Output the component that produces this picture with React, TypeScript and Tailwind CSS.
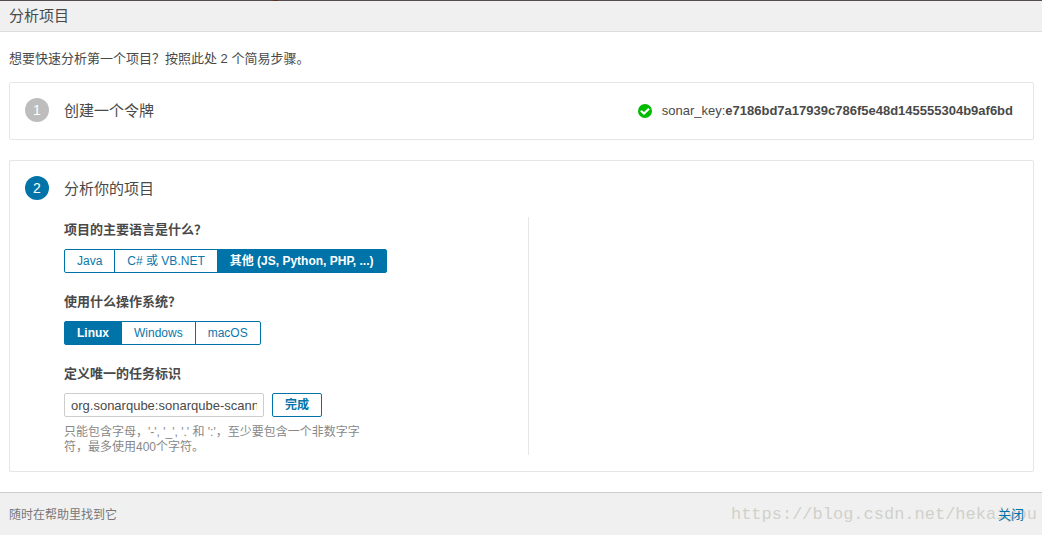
import { useState } from 'react'

const languages = ['Java', 'C# 或 VB.NET', '其他 (JS, Python, PHP, ...)']
const systems = ['Linux', 'Windows', 'macOS']

type ToggleProps = {
  label: string
  options: string[]
  value: string
  onChange: (value: string) => void
}

function Toggle({ label, options, value, onChange }: ToggleProps) {
  return (
    <div role="group" aria-label={label} className="mt-[9px] mb-[19px] flex">
      {options.map((option) => (
        <button
          key={option}
          type="button"
          aria-pressed={option === value}
          onClick={() => onChange(option)}
          className={
            '-ml-px h-6 border border-[#0073a8] px-3 text-xs leading-5 first:ml-0 first:rounded-l-xs last:rounded-r-xs ' +
            (option === value ? 'bg-[#0073a8] font-bold text-white' : 'bg-white text-[#0b78ac]')
          }
        >
          {option}
        </button>
      ))}
    </div>
  )
}

export default function App() {
  const [language, setLanguage] = useState(languages[2])
  const [system, setSystem] = useState('Linux')
  const [projectKey, setProjectKey] = useState('org.sonarqube:sonarqube-scanner')

  return (
    <div className="relative flex min-h-screen flex-col bg-white font-['Liberation_Sans','Noto_Sans_CJK_SC',sans-serif] text-[13px] leading-5 text-[#494949]">
      <span className="absolute top-0 left-[273px] h-px w-[5px] bg-[#6e2a10]" />
      <header className="border-t border-b border-t-[#534d4d] border-b-[#ddd] bg-[#f0f0f0] px-[9px] py-[5px]">
        <h1 className="text-[15px] leading-5">分析项目</h1>
      </header>

      <main className="flex-1 pt-[17px] pr-2 pb-5 pl-[9px]">
        <p className="mb-[13px]">想要快速分析第一个项目？按照此处 2 个简易步骤。</p>

        <section className="mb-5 flex h-[58px] items-start rounded-xs border border-[#e6e6e6] pt-[15px] pr-5 pl-[15px]">
          <span className="mr-[15px] size-6 rounded-full bg-[#bdbdbd] text-center text-sm leading-6 text-white">1</span>
          <h2 className="text-[15px] leading-[26px]">创建一个令牌</h2>
          <div className="ml-auto flex items-center leading-[26px]">
            <svg viewBox="0 0 14 14" className="mr-[10px] size-[14px]" aria-hidden="true">
              <circle cx="7" cy="7" r="7" fill="#00bb00" />
              <path d="M2.9 6.7 L6 9.6 L11 4.7" fill="none" stroke="#fff" strokeWidth="2.2" />
            </svg>
            <span>
              sonar_key:<strong>e7186bd7a17939c786f5e48d145555304b9af6bd</strong>
            </span>
          </div>
        </section>

        <section className="rounded-xs border border-[#e6e6e6] px-[15px] pt-[15px] pb-4">
          <div className="flex items-start">
            <span className="mr-[15px] size-6 rounded-full bg-[#0073a8] text-center text-sm leading-6 text-white">2</span>
            <h2 className="text-[15px] leading-[26px]">分析你的项目</h2>
          </div>

          <div className="mt-[15px] ml-[39px] flex pr-6">
            <div className="w-1/2 border-r border-[#e6e6e6] pt-[3px]">
              <h3 className="leading-5 font-bold">项目的主要语言是什么？</h3>
              <Toggle label="主要语言" options={languages} value={language} onChange={setLanguage} />

              <h3 className="leading-5 font-bold">使用什么操作系统？</h3>
              <Toggle label="操作系统" options={systems} value={system} onChange={setSystem} />

              <form onSubmit={(e) => e.preventDefault()}>
                <label htmlFor="project-key" className="block leading-5 font-bold">
                  定义唯一的任务标识
                </label>
                <div className="mt-[9px] flex gap-2">
                  <input
                    id="project-key"
                    type="text"
                    value={projectKey}
                    onChange={(e) => setProjectKey(e.target.value)}
                    className="h-6 w-[200px] rounded-xs border border-[#cdcdcd] px-1.5 text-[13px] outline-none"
                  />
                  <button type="submit" className="h-6 rounded-xs border border-[#0073a8] px-3 text-xs leading-5 font-bold text-[#0073a8]">
                    完成
                  </button>
                </div>
                <p className="mt-2 max-w-[300px] text-xs leading-[15px] text-[#888]">
                  只能包含字母，'-', '_', '.' 和 ':'，至少要包含一个非数字字符，最多使用400个字符。
                </p>
              </form>
            </div>
          </div>
        </section>
      </main>

      <footer className="relative flex h-[43px] items-center justify-between border-t border-[#ccc] bg-[#f0f0f0] pt-[2px] pr-[18px] pl-[9px] text-xs">
        <span className="text-[#777]">随时在帮助里找到它</span>
        <span className="absolute top-3 right-[5px] font-['Liberation_Mono',monospace] text-[17px] leading-5 text-[#d0d0cb]">
          https://blog.csdn.net/hekaiyou
        </span>
        <a href="#" className="relative text-[13px] text-[#0073a8]">关闭</a>
      </footer>
    </div>
  )
}
